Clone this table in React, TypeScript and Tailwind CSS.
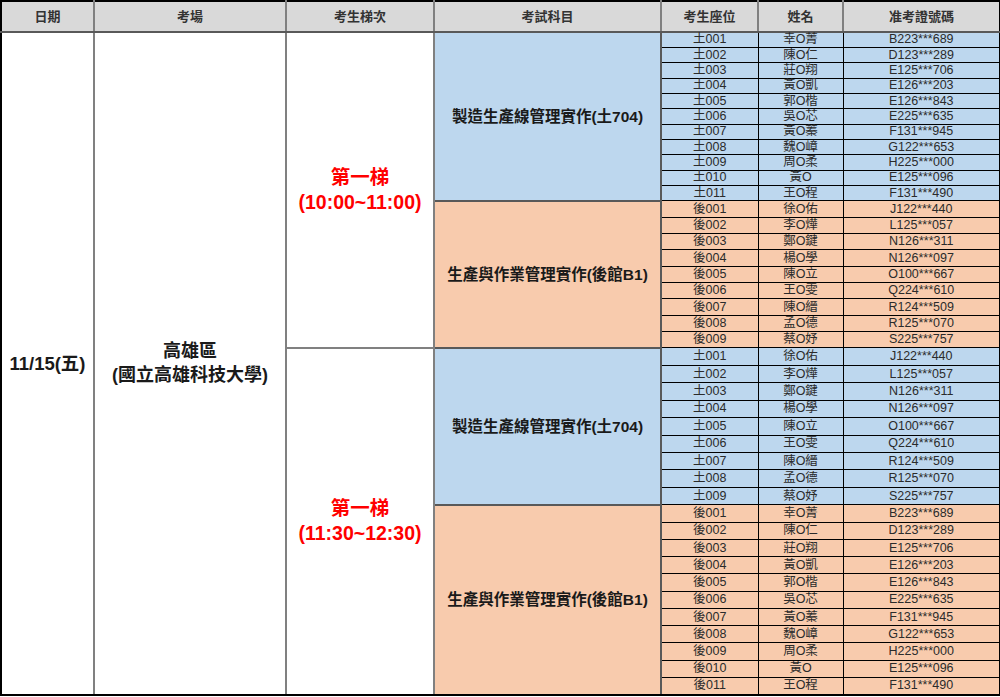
import React from "react";

type Student = { name: string; id: string };

const groupA: Student[] = [
  { name: "幸O菁", id: "B223***689" },
  { name: "陳O仁", id: "D123***289" },
  { name: "莊O翔", id: "E125***706" },
  { name: "黃O凱", id: "E126***203" },
  { name: "郭O楷", id: "E126***843" },
  { name: "吳O芯", id: "E225***635" },
  { name: "黃O蓁", id: "F131***945" },
  { name: "魏O嶂", id: "G122***653" },
  { name: "周O柔", id: "H225***000" },
  { name: "黃O", id: "E125***096" },
  { name: "王O程", id: "F131***490" },
];

const groupB: Student[] = [
  { name: "徐O佑", id: "J122***440" },
  { name: "李O燁", id: "L125***057" },
  { name: "鄭O鍵", id: "N126***311" },
  { name: "楊O學", id: "N126***097" },
  { name: "陳O立", id: "O100***667" },
  { name: "王O雯", id: "Q224***610" },
  { name: "陳O縉", id: "R124***509" },
  { name: "孟O德", id: "R125***070" },
  { name: "蔡O妤", id: "S225***757" },
];

type Block = {
  prefix: string;
  subject: string;
  bg: string;
  rowH: string;
  students: Student[];
};

const sessions: { label: string; time: string; blocks: Block[] }[] = [
  {
    label: "第一梯",
    time: "(10:00~11:00)",
    blocks: [
      { prefix: "土", subject: "製造生產線管理實作(土704)", bg: "bg-[#bdd7ee]", rowH: "h-[15.36px]", students: groupA },
      { prefix: "後", subject: "生產與作業管理實作(後館B1)", bg: "bg-[#f8cbad]", rowH: "h-[16.33px]", students: groupB },
    ],
  },
  {
    label: "第一梯",
    time: "(11:30~12:30)",
    blocks: [
      { prefix: "土", subject: "製造生產線管理實作(土704)", bg: "bg-[#bdd7ee]", rowH: "h-[17.44px]", students: groupB },
      { prefix: "後", subject: "生產與作業管理實作(後館B1)", bg: "bg-[#f8cbad]", rowH: "h-[17.27px]", students: groupA },
    ],
  },
];

const total = sessions.reduce((n, s) => n + s.blocks.reduce((m, b) => m + b.students.length, 0), 0);

const headers = ["日期", "考場", "考生梯次", "考試科目", "考生座位", "姓名", "准考證號碼"];

export default function App() {
  const rows: React.ReactNode[] = [];

  sessions.forEach((session, si) => {
    const sessionRows = session.blocks.reduce((m, b) => m + b.students.length, 0);
    const lastSession = si === sessions.length - 1;
    session.blocks.forEach((block, bi) => {
      const lastBlock = lastSession && bi === session.blocks.length - 1;
      block.students.forEach((st, i) => {
        const seat = `${block.prefix}${String(i + 1).padStart(3, "0")}`;
        const cell = `border border-black ${block.bg} p-0 text-center align-middle text-[12.5px] leading-[13px] text-[#2b2b2b]`;
        rows.push(
          <tr key={`${si}-${bi}-${i}`} className={block.rowH}>
            {si === 0 && bi === 0 && i === 0 && (
              <>
                <td rowSpan={total} className="border-2 border-[#808080] border-l-black border-b-black bg-white text-center align-middle text-[18.5px] font-bold text-[#1a1a1a]">
                  11/15(五)
                </td>
                <td rowSpan={total} className="border-2 border-[#808080] border-b-black bg-white text-center align-middle text-[18px] leading-[24px] font-bold text-[#1a1a1a]">
                  高雄區
                  <br />
                  (國立高雄科技大學)
                </td>
              </>
            )}
            {bi === 0 && i === 0 && (
              <td rowSpan={sessionRows} className={`border-2 border-[#808080] ${lastSession ? "border-b-black" : ""} bg-white text-center align-middle text-[19.5px] leading-[25px] font-bold text-[#ff0000]`}>
                {session.label}
                <br />
                {session.time}
              </td>
            )}
            {i === 0 && (
              <td rowSpan={block.students.length} className={`border-2 border-[#595959] ${lastBlock ? "border-b-black" : ""} ${block.bg} text-center align-middle text-[15.5px] font-bold text-[#1a1a1a]`}>
                {block.subject}
              </td>
            )}
            <td className={cell}>{seat}</td>
            <td className={cell}>{st.name}</td>
            <td className={cell}>{st.id}</td>
          </tr>
        );
      });
    });
  });

  return (
    <div className="w-[1000px] h-[697px] overflow-hidden bg-white font-['Liberation_Sans','Noto_Sans_CJK_TC',sans-serif]">
      <table className="w-[999px] table-fixed border-collapse border-2 border-black">
        <colgroup>
          <col className="w-[93px]" />
          <col className="w-[192px]" />
          <col className="w-[148px]" />
          <col className="w-[227px]" />
          <col className="w-[97px]" />
          <col className="w-[85px]" />
          <col className="w-[157px]" />
        </colgroup>
        <thead>
          <tr className="h-[31px]">
            {headers.map((h, i) => (
              <th
                key={h}
                className={`border-2 border-x-[#808080] border-t-black border-b-[#595959] ${i === 0 ? "border-l-black" : ""} ${i === headers.length - 1 ? "border-r-black" : ""} bg-[#d9d9d9] p-0 text-center align-middle text-[13px] font-bold text-[#333333]`}
              >
                {h}
              </th>
            ))}
          </tr>
        </thead>
        <tbody>{rows}</tbody>
      </table>
    </div>
  );
}
